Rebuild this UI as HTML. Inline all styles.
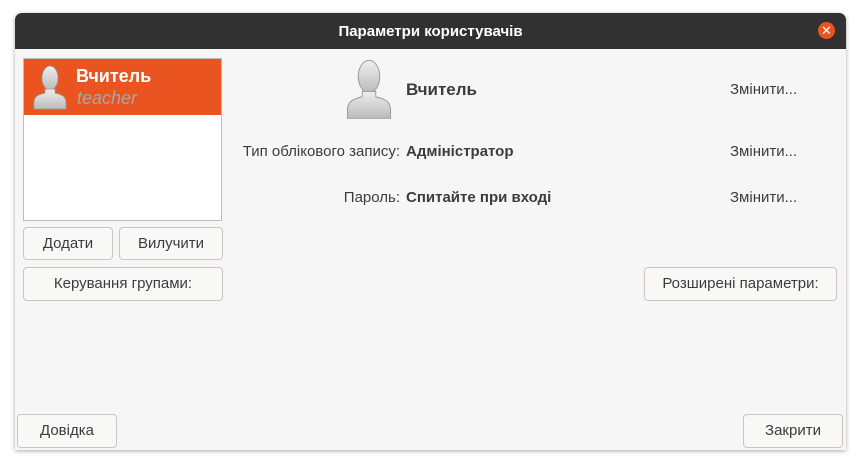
<!DOCTYPE html><html><head><meta charset="utf-8"><style>
body{margin:0;width:864px;height:469px;background:#fff;font-family:"Liberation Sans","DejaVu Sans",sans-serif;font-size:15px;color:#3c3c3c;position:relative;overflow:hidden}
.win{position:absolute;left:15px;top:13px;width:831px;height:437px;background:#f6f6f6;border-radius:7px 7px 0 0;box-shadow:0 1px 4px rgba(0,0,0,.35);overflow:hidden}
.tb{position:absolute;left:0;top:0;right:0;height:36px;background:#323131;color:#fff;font-weight:bold;font-size:15px;text-align:center;line-height:37px}
.close{position:absolute;left:803px;top:9px;width:17px;height:17px;border-radius:50%;background:#e95420;color:#fff;font-size:13px;line-height:17px;text-align:center;font-weight:bold}
.a{position:absolute}
.btn{position:absolute;border:1px solid #c9c6c2;border-radius:4px;background:#f8f8f7;text-align:center;box-sizing:border-box;color:#3c3c3c}
.lbl{position:absolute;text-align:right}
.b{font-weight:bold}
</style></head><body>
<div class="win">
<div class="tb">Параметри користувачів</div>
<div class="close">✕</div>
<div class="a" style="left:8px;top:45px;width:197px;height:161px;background:#fff;border:1px solid #c0bdb9"></div>
<div class="a" style="left:9px;top:46px;width:197px;height:56px;background:#e95420"></div>
<svg class="a" style="left:17px;top:52px" width="36" height="46" viewBox="0 0 34 46"><defs><linearGradient id="g" x1="0" y1="0" x2="0" y2="1"><stop offset="0" stop-color="#eee"/><stop offset="1" stop-color="#bbb"/></linearGradient></defs><ellipse cx="17" cy="13" rx="8" ry="12" fill="url(#g)" stroke="#999" stroke-width=".7"/><path d="M12 24 L12 28 C4 30 1 32 1 38 L1 44 L33 44 L33 38 C33 32 30 30 22 28 L22 24 Z" fill="url(#g)" stroke="#999" stroke-width=".7"/></svg>
<div class="a b" style="left:61px;top:53px;color:#fff;font-size:18px">Вчитель</div>
<div class="a" style="left:62px;top:75px;color:#b0a59f;font-size:18px;font-style:italic">teacher</div>
<div class="btn" style="left:8px;top:214px;width:90px;height:33px;line-height:31px">Додати</div>
<div class="btn" style="left:104px;top:214px;width:104px;height:33px;line-height:31px">Вилучити</div>
<div class="btn" style="left:8px;top:254px;width:200px;height:34px;line-height:32px">Керування групами:</div>
<svg class="a" style="left:329px;top:46px" width="50" height="62" viewBox="0 0 34 46"><ellipse cx="17" cy="13" rx="8" ry="12" fill="url(#g)" stroke="#999" stroke-width=".7"/><path d="M12 24 L12 28 C4 30 1 32 1 38 L1 44 L33 44 L33 38 C33 32 30 30 22 28 L22 24 Z" fill="url(#g)" stroke="#999" stroke-width=".7"/></svg>
<div class="a b" style="left:391px;top:67px;font-size:17px">Вчитель</div>
<div class="a" style="left:715px;top:68px">Змінити...</div>
<div class="lbl" style="right:446px;top:130px">Тип облікового запису:</div>
<div class="a b" style="left:391px;top:130px">Адміністратор</div>
<div class="a" style="left:715px;top:130px">Змінити...</div>
<div class="lbl" style="right:446px;top:176px">Пароль:</div>
<div class="a b" style="left:391px;top:176px">Спитайте при вході</div>
<div class="a" style="left:715px;top:176px">Змінити...</div>
<div class="btn" style="left:629px;top:254px;width:193px;height:34px;line-height:32px">Розширені параметри:</div>
<div class="btn" style="left:2px;top:401px;width:100px;height:34px;line-height:32px">Довідка</div>
<div class="btn" style="left:728px;top:401px;width:100px;height:34px;line-height:32px">Закрити</div>
</div>
</body></html>
